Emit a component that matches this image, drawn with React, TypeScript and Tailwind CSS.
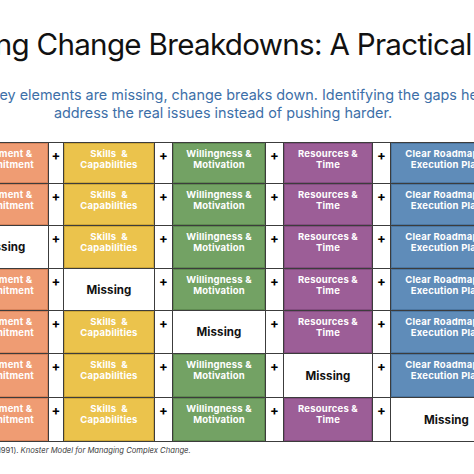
import React from "react";

type Col = { label: [string, string]; bg: string; bd: string };

const cols: Col[] = [
  { label: ["Alignment &", "Commitment"], bg: "bg-[#EF9C73]", bd: "shadow-[inset_0_0_0_1px_#d8845c]" },
  { label: ["Skills  &", "Capabilities"], bg: "bg-[#EBC34C]", bd: "shadow-[inset_0_0_0_1px_#cfa838]" },
  { label: ["Willingness &", "Motivation"], bg: "bg-[#73A264]", bd: "shadow-[inset_0_0_0_1px_#5e8a50]" },
  { label: ["Resources &", "Time"], bg: "bg-[#9C5E97]", bd: "shadow-[inset_0_0_0_1px_#844c80]" },
  { label: ["Clear Roadmap &", "Execution Plan"], bg: "bg-[#5F8CB9]", bd: "shadow-[inset_0_0_0_1px_#4c77a2]" },
];

const rowHeights = ["h-[40px]", "h-[41px]", "h-[42px]", "h-[41px]", "h-[42px]", "h-[43px]", "h-[43px]"];
const missingCol = [-1, -1, 0, 1, 2, 3, 4];

function Cell({ col, missing }: { col: Col; missing: boolean }) {
  if (missing) {
    return (
      <div className="bg-white flex items-center justify-center pt-[2px]">
        <span className="text-[11.5px] font-bold text-[#111] tracking-[0.1px]">Missing</span>
      </div>
    );
  }
  return (
    <div className={`${col.bg} ${col.bd} flex flex-col items-center pt-[5px] text-white font-bold text-[9.5px] leading-[11px] tracking-[0.2px] whitespace-pre`}>
      <span>{col.label[0]}</span>
      <span>{col.label[1]}</span>
    </div>
  );
}

function Plus() {
  return (
    <div className="bg-white flex justify-center pt-[5px]">
      <span className="text-[13px] font-bold text-black leading-[14px]">+</span>
    </div>
  );
}

export default function App() {
  return (
    <div
      className="w-[474px] h-[474px] overflow-hidden bg-white relative"
      style={{ fontFamily: "Inter, 'Noto Sans', 'Liberation Sans', sans-serif" }}
    >
      <div className="w-[700px] ml-[-127px] flex flex-col">
        <div className="pt-[26px] pr-[9px] text-[29.6px] leading-[37px] text-[#111] whitespace-nowrap tracking-[-0.7px] text-center">
          Diagnosing Change Breakdowns: A Practical Guide
        </div>
        <div className="mt-[23px] text-[14.4px] leading-[18px] text-[#3D6FA8] text-center whitespace-nowrap">
          <div>When key elements are missing, change breaks down. Identifying the gaps helps</div>
          <div>address the real issues instead of pushing harder.</div>
        </div>
        <div className="self-start ml-[84px] mt-[20px] grid grid-cols-[90px_14px_90px_17px_92px_17px_88px_17px_111px] gap-px bg-[#3c3c3c] p-px">
          {rowHeights.map((h, r) => (
            <React.Fragment key={r}>
              {cols.map((c, i) => (
                <React.Fragment key={i}>
                  <div className={`${h} grid`}>
                    <Cell col={c} missing={missingCol[r] === i} />
                  </div>
                  {i < cols.length - 1 && (
                    <div className={`${h} grid`}>
                      <Plus />
                    </div>
                  )}
                </React.Fragment>
              ))}
            </React.Fragment>
          ))}
        </div>
        <div className="self-start ml-[81px] mt-[4px] text-[7.65px] leading-[10px] text-[#404040] whitespace-nowrap">
          Knoster, T. (1991). <span className="italic">Knoster Model for Managing Complex Change.</span>
        </div>
      </div>
    </div>
  );
}
